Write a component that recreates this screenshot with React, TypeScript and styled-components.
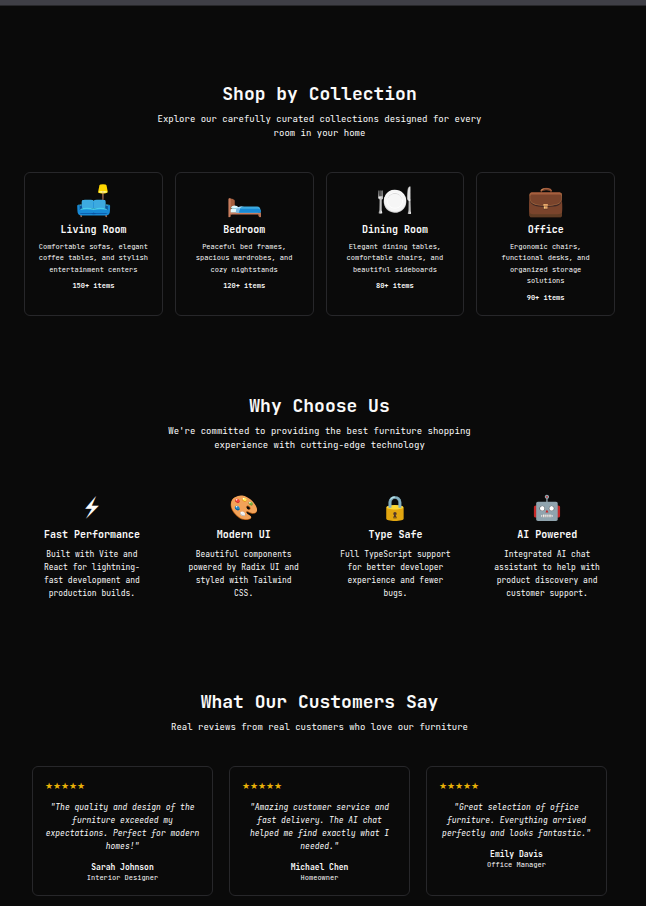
import React from "react";
import styled, { createGlobalStyle } from "styled-components";

const GlobalStyle = createGlobalStyle`
  * { box-sizing: border-box; margin: 0; padding: 0; }
  body {
    background: #0a0a0a;
    color: #fafafa;
    font-family: "JetBrains Mono", "Noto Sans Mono", "DejaVu Sans Mono", monospace;
    font-size: 9px;
  }
`;

const TopBar = styled.div`
  height: 6px;
  background: #3f3f46;
  border-bottom: 1px solid #27272a;
`;

const Page = styled.main`
  padding-right: 7px;
`;

const Section = styled.section<{ $narrow?: boolean }>`
  padding: 74px ${(p) => (p.$narrow ? 32 : 24)}px 0;
  & + & { padding-top: 76px; }
`;

const SectionHeader = styled.header`
  display: flex;
  flex-direction: column;
  align-items: center;
  gap: 4px;
  margin-bottom: 32px;
  text-align: center;
`;

const SectionTitle = styled.h2`
  font-size: 18px;
  line-height: 28px;
  font-weight: 700;
`;

const SectionText = styled.p`
  max-width: 336px;
  line-height: 14px;
`;

const Grid = styled.div<{ $columns: number; $gap: number }>`
  display: grid;
  grid-template-columns: repeat(${(p) => p.$columns}, minmax(0, 1fr));
  gap: ${(p) => p.$gap}px;
`;

const Card = styled.article`
  border: 1px solid #27272a;
  border-radius: 6px;
  padding: 12px;
  text-align: center;
`;

const CollectionIcon = styled.div`
  font-size: 30px;
  line-height: 30px;
  margin-bottom: 8px;
`;

const ItemTitle = styled.h3`
  font-size: 10px;
  line-height: 14px;
  font-weight: 700;
`;

const CollectionText = styled.p`
  margin: 4px 0 6px;
  font-size: 7px;
  line-height: 1.625;
`;

const ItemCount = styled.p`
  font-size: 7px;
  line-height: 10px;
  font-weight: 700;
`;

const Feature = styled.article`
  padding: 10px 12px 12px;
  text-align: center;
`;

const FeatureIcon = styled.div`
  font-size: 24px;
  line-height: 28px;
  margin-bottom: 6px;
`;

const FeatureText = styled.p`
  margin-top: 6px;
  font-size: 8px;
  line-height: 13px;
`;

const Stars = styled.div`
  text-align: left;
  font-family: "JetBrains Mono", serif;
  font-size: 9px;
  line-height: 14px;
  color: #eab308;
`;

const Quote = styled.blockquote`
  margin: 8px 0;
  font-size: 8px;
  line-height: 13px;
  font-style: italic;
`;

const Author = styled.p`
  font-size: 8px;
  line-height: 12px;
  font-weight: 700;
`;

const Role = styled.p`
  font-size: 7px;
  line-height: 10px;
`;

const collections = [
  { icon: "🛋️", name: "Living Room", text: "Comfortable sofas, elegant coffee tables, and stylish entertainment centers", count: "150+ items" },
  { icon: "🛏️", name: "Bedroom", text: "Peaceful bed frames, spacious wardrobes, and cozy nightstands", count: "120+ items" },
  { icon: "🍽️", name: "Dining Room", text: "Elegant dining tables, comfortable chairs, and beautiful sideboards", count: "80+ items" },
  { icon: "💼", name: "Office", text: "Ergonomic chairs, functional desks, and organized storage solutions", count: "90+ items" },
];

const features = [
  { icon: "⚡", name: "Fast Performance", text: "Built with Vite and React for lightning-fast development and production builds." },
  { icon: "🎨", name: "Modern UI", text: "Beautiful components powered by Radix UI and styled with Tailwind CSS." },
  { icon: "🔒", name: "Type Safe", text: "Full TypeScript support for better developer experience and fewer bugs." },
  { icon: "🤖", name: "AI Powered", text: "Integrated AI chat assistant to help with product discovery and customer support." },
];

const reviews = [
  { text: "The quality and design of the furniture exceeded my expectations. Perfect for modern homes!", author: "Sarah Johnson", role: "Interior Designer" },
  { text: "Amazing customer service and fast delivery. The AI chat helped me find exactly what I needed.", author: "Michael Chen", role: "Homeowner" },
  { text: "Great selection of office furniture. Everything arrived perfectly and looks fantastic.", author: "Emily Davis", role: "Office Manager" },
];

function Heading({ title, text }: { title: string; text: string }) {
  return (
    <SectionHeader>
      <SectionTitle>{title}</SectionTitle>
      <SectionText>{text}</SectionText>
    </SectionHeader>
  );
}

export default function App() {
  return (
    <>
      <GlobalStyle />
      <TopBar />
      <Page>
        <Section>
          <Heading title="Shop by Collection" text="Explore our carefully curated collections designed for every room in your home" />
          <Grid $columns={4} $gap={12}>
            {collections.map((c) => (
              <Card key={c.name}>
                <CollectionIcon>{c.icon}</CollectionIcon>
                <ItemTitle>{c.name}</ItemTitle>
                <CollectionText>{c.text}</CollectionText>
                <ItemCount>{c.count}</ItemCount>
              </Card>
            ))}
          </Grid>
        </Section>
        <Section>
          <Heading title="Why Choose Us" text="We're committed to providing the best furniture shopping experience with cutting-edge technology" />
          <Grid $columns={4} $gap={16}>
            {features.map((f) => (
              <Feature key={f.name}>
                <FeatureIcon>{f.icon}</FeatureIcon>
                <ItemTitle>{f.name}</ItemTitle>
                <FeatureText>{f.text}</FeatureText>
              </Feature>
            ))}
          </Grid>
        </Section>
        <Section $narrow>
          <Heading title="What Our Customers Say" text="Real reviews from real customers who love our furniture" />
          <Grid $columns={3} $gap={16}>
            {reviews.map((r) => (
              <Card key={r.author}>
                <Stars role="img" aria-label="5 out of 5 stars">★★★★★</Stars>
                <Quote>"{r.text}"</Quote>
                <Author>{r.author}</Author>
                <Role>{r.role}</Role>
              </Card>
            ))}
          </Grid>
        </Section>
      </Page>
    </>
  );
}
